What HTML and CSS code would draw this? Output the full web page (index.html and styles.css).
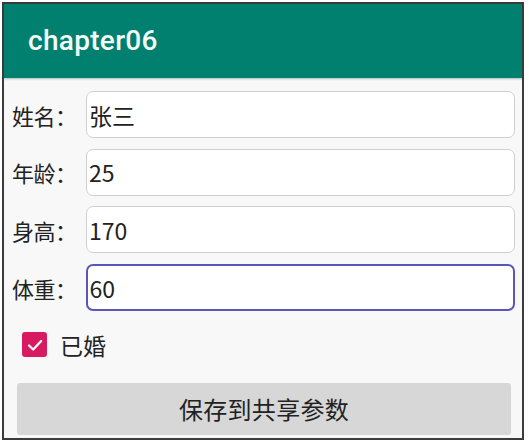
FILE: index.html
```html
<!DOCTYPE html>
<html lang="zh-CN">
<head>
<meta charset="utf-8">
<title>chapter06</title>
<link rel="stylesheet" href="styles.css">
</head>
<body>
<div class="frame">
  <header class="appbar">
    <h1 class="title">chapter06</h1>
  </header>
  <main class="form">
    <div class="row">
      <label class="label" for="name">姓名：</label>
      <input class="field" id="name" type="text" value="张三">
    </div>
    <div class="row">
      <label class="label" for="age">年龄：</label>
      <input class="field" id="age" type="text" value="25">
    </div>
    <div class="row">
      <label class="label" for="height">身高：</label>
      <input class="field" id="height" type="text" value="170">
    </div>
    <div class="row">
      <label class="label" for="weight">体重：</label>
      <input class="field field-focused" id="weight" type="text" value="60">
    </div>
    <div class="check-row">
      <span class="checkbox">
        <svg viewBox="0 0 24 24" width="24" height="24"><path d="M6 12.5 L10.2 16.5 L18.2 8" fill="none" stroke="#fff" stroke-width="2.2" stroke-linecap="round" stroke-linejoin="round"/></svg>
      </span>
      <span class="check-label">已婚</span>
    </div>
    <button class="save-btn" type="button">保存到共享参数</button>
  </main>
</div>
</body>
</html>
```

FILE: styles.css
```css
* { box-sizing: border-box; }
html, body {
  margin: 0;
  padding: 0;
  background: #ffffff;
}
body {
  width: 529px;
  height: 443px;
  overflow: hidden;
  font-family: "Noto Sans CJK SC", "Noto Sans", sans-serif;
}
.frame {
  margin: 2px 0 0 2px;
  width: 522px;
  height: 438px;
  border: 2px solid #3b3b3b;
  background: #f8f8f8;
  display: flex;
  flex-direction: column;
}
.appbar {
  height: 74px;
  flex: none;
  background: #01806f;
  box-shadow: 0 1px 2px rgba(0, 90, 80, 0.35);
  display: flex;
  align-items: center;
  padding-left: 24px;
}
.title {
  margin: 0;
  font-family: Roboto, "Noto Sans", sans-serif;
  font-weight: 500;
  font-size: 28px;
  color: #f4fbf9;
  letter-spacing: 0.3px;
  padding-bottom: 2px;
}
.form {
  flex: 1;
  display: flex;
  flex-direction: column;
  padding: 13px 7px 3px 8px;
}
.row {
  display: flex;
  align-items: center;
  height: 47px;
  margin-bottom: 10.7px;
}
.label {
  width: 74px;
  flex: none;
  font-size: 22px;
  color: #222222;
  letter-spacing: -0.5px;
  white-space: nowrap;
}
.field {
  flex: 1;
  min-width: 0;
  height: 47px;
  border: 1.5px solid #cfcfcf;
  border-radius: 7px;
  background: #ffffff;
  padding: 0 0 0 2px;
  font-family: "Noto Sans CJK SC", "Noto Sans", sans-serif;
  font-size: 23px;
  color: #222222;
  outline: none;
}
.field-focused {
  border: 2px solid #5b55b8;
  padding-left: 1.5px;
}
.check-row {
  display: flex;
  align-items: center;
  height: 40px;
  margin-top: 3px;
  padding-left: 10px;
}
.checkbox {
  width: 25px;
  height: 25px;
  border-radius: 3px;
  background: #d81b60;
  display: flex;
  align-items: center;
  justify-content: center;
  flex: none;
}
.check-label {
  margin-left: 13px;
  font-size: 23px;
  color: #222222;
}
.save-btn {
  margin: 18px 4px 0 5px;
  height: 52px;
  border: none;
  border-radius: 3px;
  background: #d7d7d7;
  font-family: "Noto Sans CJK SC", "Noto Sans", sans-serif;
  font-size: 24px;
  color: #222222;
  letter-spacing: 0.3px;
}
```
